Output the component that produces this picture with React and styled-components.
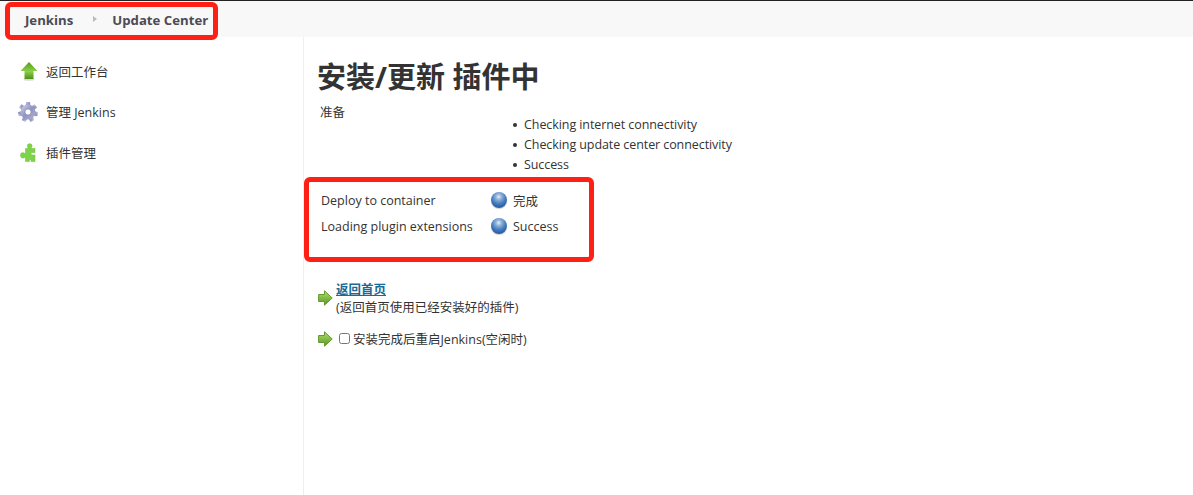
import React from 'react';
import styled, { createGlobalStyle } from 'styled-components';

const GlobalStyle = createGlobalStyle`
  html, body {
    margin: 0;
    padding: 0;
    background: #fff;
  }
  body {
    font-family: "Open Sans", "Noto Sans CJK SC", sans-serif;
    font-size: 12.5px;
    color: #333;
  }
`;

const Page = styled.div`
  position: relative;
  width: 1193px;
  height: 495px;
  overflow: hidden;
  border-top: 1px solid #222;
  box-sizing: border-box;
`;

const Breadcrumbs = styled.div`
  display: flex;
  align-items: center;
  box-sizing: border-box;
  height: 36px;
  padding: 2px 0 0 25px;
  background: #f8f8f8;
  font-weight: 700;
  font-size: 13.2px;
  color: #4b4b55;
`;

const Crumb = styled.span`
  line-height: 34px;
`;

const Chevron = styled.span`
  width: 0;
  height: 0;
  margin: 0 15px 2px 20px;
  border-left: 4px solid #bbb;
  border-top: 3px solid transparent;
  border-bottom: 3px solid transparent;
`;

const Body = styled.div`
  display: flex;
  height: 458px;
`;

const Sidebar = styled.aside`
  width: 304px;
  flex: none;
  box-sizing: border-box;
  border-right: 1px solid #eee;
  padding: 14px 0 0 17px;
`;

const SideItem = styled.div`
  display: flex;
  align-items: center;
  gap: 7px;
  height: 40.5px;
  color: #333;
`;

const IconBox = styled.span`
  display: flex;
  width: 22px;
  height: 22px;
  flex: none;
`;

const Main = styled.main`
  flex: 1;
  padding: 21px 0 0 13px;
`;

const Title = styled.h1`
  margin: 0;
  font-size: 29px;
  line-height: 38px;
  font-weight: 700;
  color: #333;
`;

const Prepare = styled.div`
  margin: 8px 0 0 3px;
  line-height: 18px;
`;

const CheckList = styled.ul`
  list-style: none;
  margin: -7px 0 0 0;
  padding-left: 196px;
  letter-spacing: -0.08px;
  li {
    display: flex;
    align-items: center;
    height: 20px;
    line-height: 20px;
  }
  li::before {
    content: "";
    width: 4px;
    height: 4px;
    margin-right: 7px;
    border-radius: 50%;
    background: #333;
  }
`;

const StatusTable = styled.div`
  display: grid;
  grid-template-columns: 170px auto;
  grid-auto-rows: 26px;
  width: max-content;
  margin: 12px 0 0 4px;
  align-items: center;
`;

const StatusValue = styled.div`
  display: flex;
  align-items: center;
  gap: 6px;
`;

const Ball = styled.span`
  width: 16px;
  height: 16px;
  border-radius: 50%;
  background: radial-gradient(circle at 48% 30%, #e6edf4 0, #94b4da 20%, #4a7fc0 48%, #1f559f 82%, #2f65a8 100%);
  box-shadow: 0 1px 1px #ccc;
`;

const ActionRow = styled.div`
  display: flex;
  align-items: ${(p) => (p.$center ? 'center' : 'flex-start')};
  margin-top: ${(p) => p.$top}px;
  gap: 3px;
`;

const ArrowBox = styled.span`
  display: flex;
  width: 15px;
  height: 16px;
  margin-top: ${(p) => p.$top || 0}px;
  margin-left: 1px;
  flex: none;
`;

const HomeLink = styled.a`
  display: block;
  font-weight: 700;
  color: #1a6a96;
  text-decoration: underline;
  line-height: 16px;
`;

const Note = styled.div`
  line-height: 20px;
  color: #333;
`;

const RestartLabel = styled.label`
  display: flex;
  align-items: center;
  gap: 3px;
  margin-left: 3px;
`;

const Check = styled.input`
  width: 11px;
  height: 11px;
  margin: 0;
`;

const Mark = styled.div`
  position: absolute;
  left: ${(p) => p.$x}px;
  top: ${(p) => p.$y}px;
  width: ${(p) => p.$w}px;
  height: ${(p) => p.$h}px;
  box-sizing: border-box;
  border: 5px solid #ff2015;
  border-radius: 6px;
  pointer-events: none;
`;

function UpIcon() {
  return (
    <svg width="22" height="22" viewBox="0 0 22 22">
      <defs>
        <linearGradient id="up" x1="0" y1="0" x2="0" y2="1">
          <stop offset="0" stopColor="#4f9e12" />
          <stop offset="0.55" stopColor="#8ccf4a" />
          <stop offset="1" stopColor="#4d8f18" />
        </linearGradient>
      </defs>
      <ellipse cx="12" cy="19.5" rx="5.5" ry="1.2" fill="#d8d8d8" />
      <path d="M12 2 L20.5 11 H16.5 V19 H7.5 V11 H3.5 Z" fill="url(#up)" />
    </svg>
  );
}

function GearIcon() {
  const teeth = [0, 51.4, 102.8, 154.3, 205.7, 257.1, 308.6];
  return (
    <svg width="22" height="22" viewBox="0 0 22 22">
      <defs>
        <linearGradient id="gear" x1="0" y1="0" x2="1" y2="1">
          <stop offset="0" stopColor="#d4d6ea" />
          <stop offset="0.5" stopColor="#8f94c4" />
          <stop offset="1" stopColor="#b4b4c8" />
        </linearGradient>
      </defs>
      <g fill="url(#gear)">
        {teeth.map((a) => (
          <path key={a} d="M8.4 6 L9 1 H13 L13.6 6 Z" transform={`rotate(${a} 11 11)`} />
        ))}
        <circle cx="11" cy="11" r="7.4" />
      </g>
      <circle cx="11" cy="11" r="3" fill="#fff" stroke="#7d80ab" strokeWidth="0.6" />
    </svg>
  );
}

function PuzzleIcon() {
  return (
    <svg width="22" height="22" viewBox="0 0 22 22">
      <path
        d="M8.5 7.5 H11 C11 6 10 5.5 10.4 4 C10.9 2.4 14.4 2.4 15 4 C15.4 5.5 14.4 6 14.4 7.5 H18 V11.5 H14.8 C13.8 11.5 13.8 14 14.8 14 H18 V20.5 H14 V18.5 H12.4 V20.5 H8.5 V16.5 C7 16.5 6.5 17.4 5 17 C3 16.4 3 12.4 5 11.8 C6.5 11.4 7 12.4 8.5 12.4 Z"
        fill="#7ed348"
        stroke="#68be38"
        strokeWidth="0.5"
      />
    </svg>
  );
}

function ArrowIcon({ id }) {
  return (
    <svg width="15" height="16" viewBox="0 0 15 16">
      <defs>
        <linearGradient id={id} x1="0" y1="0" x2="0" y2="1">
          <stop offset="0" stopColor="#b8dc6a" />
          <stop offset="1" stopColor="#4f9a24" />
        </linearGradient>
      </defs>
      <path d="M0.6 4.5 H6.5 V0.8 L14.2 8 L6.5 15.2 V11.5 H0.6 Z" fill={`url(#${id})`} stroke="#649a30" strokeWidth="1" />
    </svg>
  );
}

export default function App() {
  return (
    <>
      <GlobalStyle />
      <Page>
        <Breadcrumbs>
          <Crumb>Jenkins</Crumb>
          <Chevron />
          <Crumb>Update Center</Crumb>
        </Breadcrumbs>
        <Body>
          <Sidebar>
            <SideItem><IconBox><UpIcon /></IconBox>返回工作台</SideItem>
            <SideItem><IconBox><GearIcon /></IconBox>管理 Jenkins</SideItem>
            <SideItem><IconBox><PuzzleIcon /></IconBox>插件管理</SideItem>
          </Sidebar>
          <Main>
            <Title>安装/更新 插件中</Title>
            <Prepare>准备</Prepare>
            <CheckList>
              <li>Checking internet connectivity</li>
              <li>Checking update center connectivity</li>
              <li>Success</li>
            </CheckList>
            <StatusTable>
              <div>Deploy to container</div>
              <StatusValue><Ball />完成</StatusValue>
              <div>Loading plugin extensions</div>
              <StatusValue><Ball />Success</StatusValue>
            </StatusTable>
            <ActionRow $top={43}>
              <ArrowBox $top={8}><ArrowIcon id="arrow-home" /></ArrowBox>
              <div>
                <HomeLink href="#">返回首页</HomeLink>
                <Note>(返回首页使用已经安装好的插件)</Note>
              </div>
            </ActionRow>
            <ActionRow $top={11} $center>
              <ArrowBox><ArrowIcon id="arrow-restart" /></ArrowBox>
              <RestartLabel><Check type="checkbox" />安装完成后重启Jenkins(空闲时)</RestartLabel>
            </ActionRow>
          </Main>
        </Body>
        <Mark $x={5} $y={1} $w={213} $h={38} />
        <Mark $x={304} $y={176} $w={290} $h={85} />
      </Page>
    </>
  );
}
